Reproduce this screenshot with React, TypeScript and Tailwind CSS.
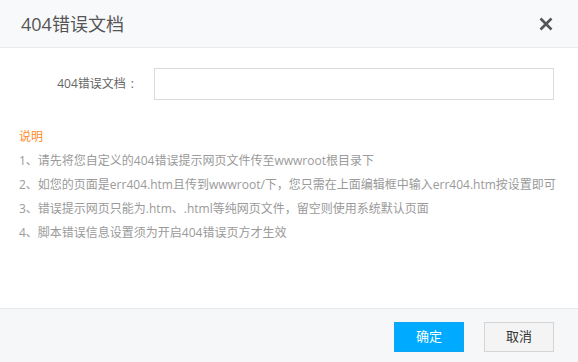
const tips = [
  "1、请先将您自定义的404错误提示网页文件传至wwwroot根目录下",
  "2、如您的页面是err404.htm且传到wwwroot/下，您只需在上面编辑框中输入err404.htm按设置即可",
  "3、错误提示网页只能为.htm、.html等纯网页文件，留空则使用系统默认页面",
  "4、脚本错误信息设置须为开启404错误页方才生效",
];

function CloseIcon() {
  return (
    <svg width="14" height="14" viewBox="0 0 14 14" fill="none">
      <path d="M1.5 1.5L12.5 12.5M12.5 1.5L1.5 12.5" stroke="#555" strokeWidth="2.6" />
    </svg>
  );
}

export default function App() {
  return (
    <div
      className="w-[578px] h-[362px] bg-white flex flex-col overflow-hidden"
      style={{ fontFamily: '"Open Sans", "Noto Sans CJK SC", sans-serif' }}
    >
      {/* header */}
      <div className="h-[48px] shrink-0 flex items-center justify-between pl-[21px] pr-[25px] bg-[#f8f9fb] border-b border-[#e8eaec]">
        <span className="text-[18px] text-[#555] leading-none">404错误文档</span>
        <button className="w-[14px] h-[14px] flex items-center justify-center">
          <CloseIcon />
        </button>
      </div>

      {/* body */}
      <div className="flex-1 pt-[20px]">
        <div className="flex items-center">
          <label className="w-[142px] flex justify-end pr-[8px] text-[12px] text-[#666]">
            404错误文档<span className="ml-[5px]">:</span>
          </label>
          <input
            type="text"
            className="ml-[12px] w-[400px] h-[32px] border border-[#d9dcdf] outline-none px-2 text-[12px]"
          />
        </div>

        <div className="mt-[25px] pl-[19px] text-[12px] leading-6">
          <div className="text-[#ff8a1f]">说明</div>
          {tips.map((t) => (
            <div key={t} className="text-[#9a9a9a] whitespace-nowrap">
              {t}
            </div>
          ))}
        </div>
      </div>

      {/* footer */}
      <div className="h-[54px] shrink-0 bg-[#f5f7f8] border-t border-[#e6e8ea] flex items-start justify-end gap-[20px] pt-[13px] pr-[24px]">
        <button className="w-[70px] h-[30px] bg-[#00aaff] border border-[#10a5f0] text-white text-[13px]">
          确定
        </button>
        <button className="w-[70px] h-[30px] bg-[#f4f4f4] border border-[#d5d5d5] text-[#333] text-[13px]">
          取消
        </button>
      </div>
    </div>
  );
}
